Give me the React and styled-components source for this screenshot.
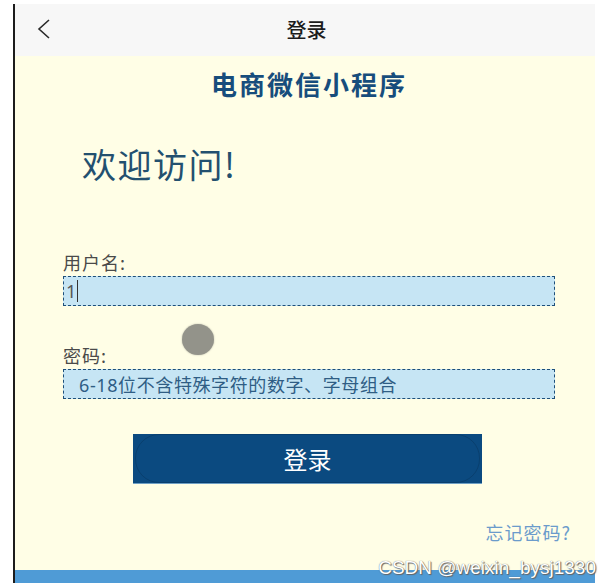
import React from "react";
import styled, { createGlobalStyle } from "styled-components";

const colours = {
  ink: "#1c1c1c",
  navy: "#174d7c",
  cream: "#fffee6",
  header: "#f7f7f7",
  field: "#c6e5f4",
  fieldLine: "#1d4f7a",
  button: "#0b4a80",
  footer: "#4f9bd6",
  link: "#6b9bcb",
  label: "#4a4a4a"
};

const Global = createGlobalStyle`
  html, body {
    margin: 0;
    padding: 0;
    background: #fff;
    font-family: "Noto Sans CJK SC", "Noto Sans", sans-serif;
  }
`;

const Page = styled.div`
  position: relative;
  width: 610px;
  height: 588px;
  overflow: hidden;
`;

const Phone = styled.div`
  display: flex;
  flex-direction: column;
  margin: 4px 0 0 13px;
  width: 580px;
  height: 579px;
  border-left: 2px solid ${colours.ink};
`;

const NavBar = styled.div`
  position: relative;
  display: flex;
  align-items: center;
  justify-content: center;
  height: 52px;
  flex-shrink: 0;
  background: ${colours.header};
`;

const BackButton = styled.div`
  position: absolute;
  left: 20px;
  top: 13px;
  width: 20px;
  height: 24px;
`;

const NavTitle = styled.div`
  font-size: 20px;
  font-weight: 500;
  color: ${colours.ink};
  line-height: 24px;
  margin-left: 3px;
`;

const Body = styled.div`
  flex: 1;
  display: flex;
  flex-direction: column;
  padding-top: 13px;
  background: ${colours.cream};
`;

const AppName = styled.div`
  text-align: center;
  padding-left: 8px;
  font-size: 26px;
  line-height: 30px;
  font-weight: 700;
  letter-spacing: 2px;
  color: ${colours.navy};
`;

const Welcome = styled.div`
  margin-top: 45px;
  padding-left: 67px;
  font-size: 34px;
  line-height: 40px;
  letter-spacing: 1.5px;
  color: #23506f;
`;

const Form = styled.div`
  display: flex;
  flex-direction: column;
  margin-left: 48px;
  width: 492px;
`;

const Label = styled.div`
  margin-top: ${p => p.gap}px;
  font-size: 18px;
  line-height: 22px;
  letter-spacing: 1px;
  color: ${colours.label};
`;

const Field = styled.div`
  box-sizing: border-box;
  display: flex;
  align-items: center;
  margin-top: 3px;
  height: 30px;
  padding-left: ${p => (p.placeholder ? 15 : 2)}px;
  background: ${colours.field};
  border: 1px dashed ${colours.fieldLine};
  font-family: "Noto Sans", "Noto Sans CJK SC", sans-serif;
  font-size: 18px;
  letter-spacing: ${p => (p.placeholder ? 0.6 : 0)}px;
  color: ${p => (p.placeholder ? "#2f5d84" : "#555")};
`;

const Caret = styled.span`
  display: inline-block;
  width: 1px;
  height: 22px;
  margin-left: 1px;
  background: #333;
`;

const SubmitButton = styled.div`
  position: relative;
  box-sizing: border-box;
  display: flex;
  align-items: center;
  justify-content: center;
  margin: 35px 0 0 70px;
  width: 349px;
  height: 49px;
  background: ${colours.button};
  box-shadow: 0 1px 0 #6e9fc4;
  color: #fff;
  font-size: 24px;
  &::after {
    content: "";
    position: absolute;
    inset: 0 2px;
    border-radius: 24px;
    border: 1px solid rgba(0, 0, 0, 0.14);
  }
`;

const Forgot = styled.div`
  margin-top: 37px;
  padding-right: 24px;
  text-align: right;
  font-size: 18px;
  line-height: 24px;
  letter-spacing: 1px;
  color: ${colours.link};
`;

const FooterBar = styled.div`
  height: 13px;
  flex-shrink: 0;
  background: ${colours.footer};
`;

const TouchDot = styled.div`
  position: absolute;
  left: 182px;
  top: 324px;
  width: 32px;
  height: 31px;
  border-radius: 50%;
  background: #93938a;
  box-shadow: 0 0 2px #b8b8a8;
`;

const Watermark = styled.div`
  position: absolute;
  right: 14px;
  bottom: 9px;
  font-family: "Liberation Sans", Arial, sans-serif;
  font-size: 19px;
  color: #fff;
  text-shadow: 0 0 1px #555, 1px 1px 1px #666;
`;

const Chevron = () => (
  <svg width="20" height="24" viewBox="0 0 20 24">
    <path d="M14 3 L4 12 L14 21" fill="none" stroke="#2a2a2a" strokeWidth="1.6" />
  </svg>
);

const App = () => (
  <Page>
    <Global />
    <Phone>
      <NavBar>
        <BackButton>
          <Chevron />
        </BackButton>
        <NavTitle>登录</NavTitle>
      </NavBar>
      <Body>
        <AppName>电商微信小程序</AppName>
        <Welcome>欢迎访问!</Welcome>
        <Form>
          <Label gap={67}>用户名:</Label>
          <Field>
            1<Caret />
          </Field>
          <Label gap={38}>密码:</Label>
          <Field placeholder="true">6-18位不含特殊字符的数字、字母组合</Field>
          <SubmitButton>登录</SubmitButton>
        </Form>
        <Forgot>忘记密码?</Forgot>
      </Body>
      <FooterBar />
    </Phone>
    <TouchDot />
    <Watermark>CSDN @weixin_bysj1330</Watermark>
  </Page>
);

export default App;
